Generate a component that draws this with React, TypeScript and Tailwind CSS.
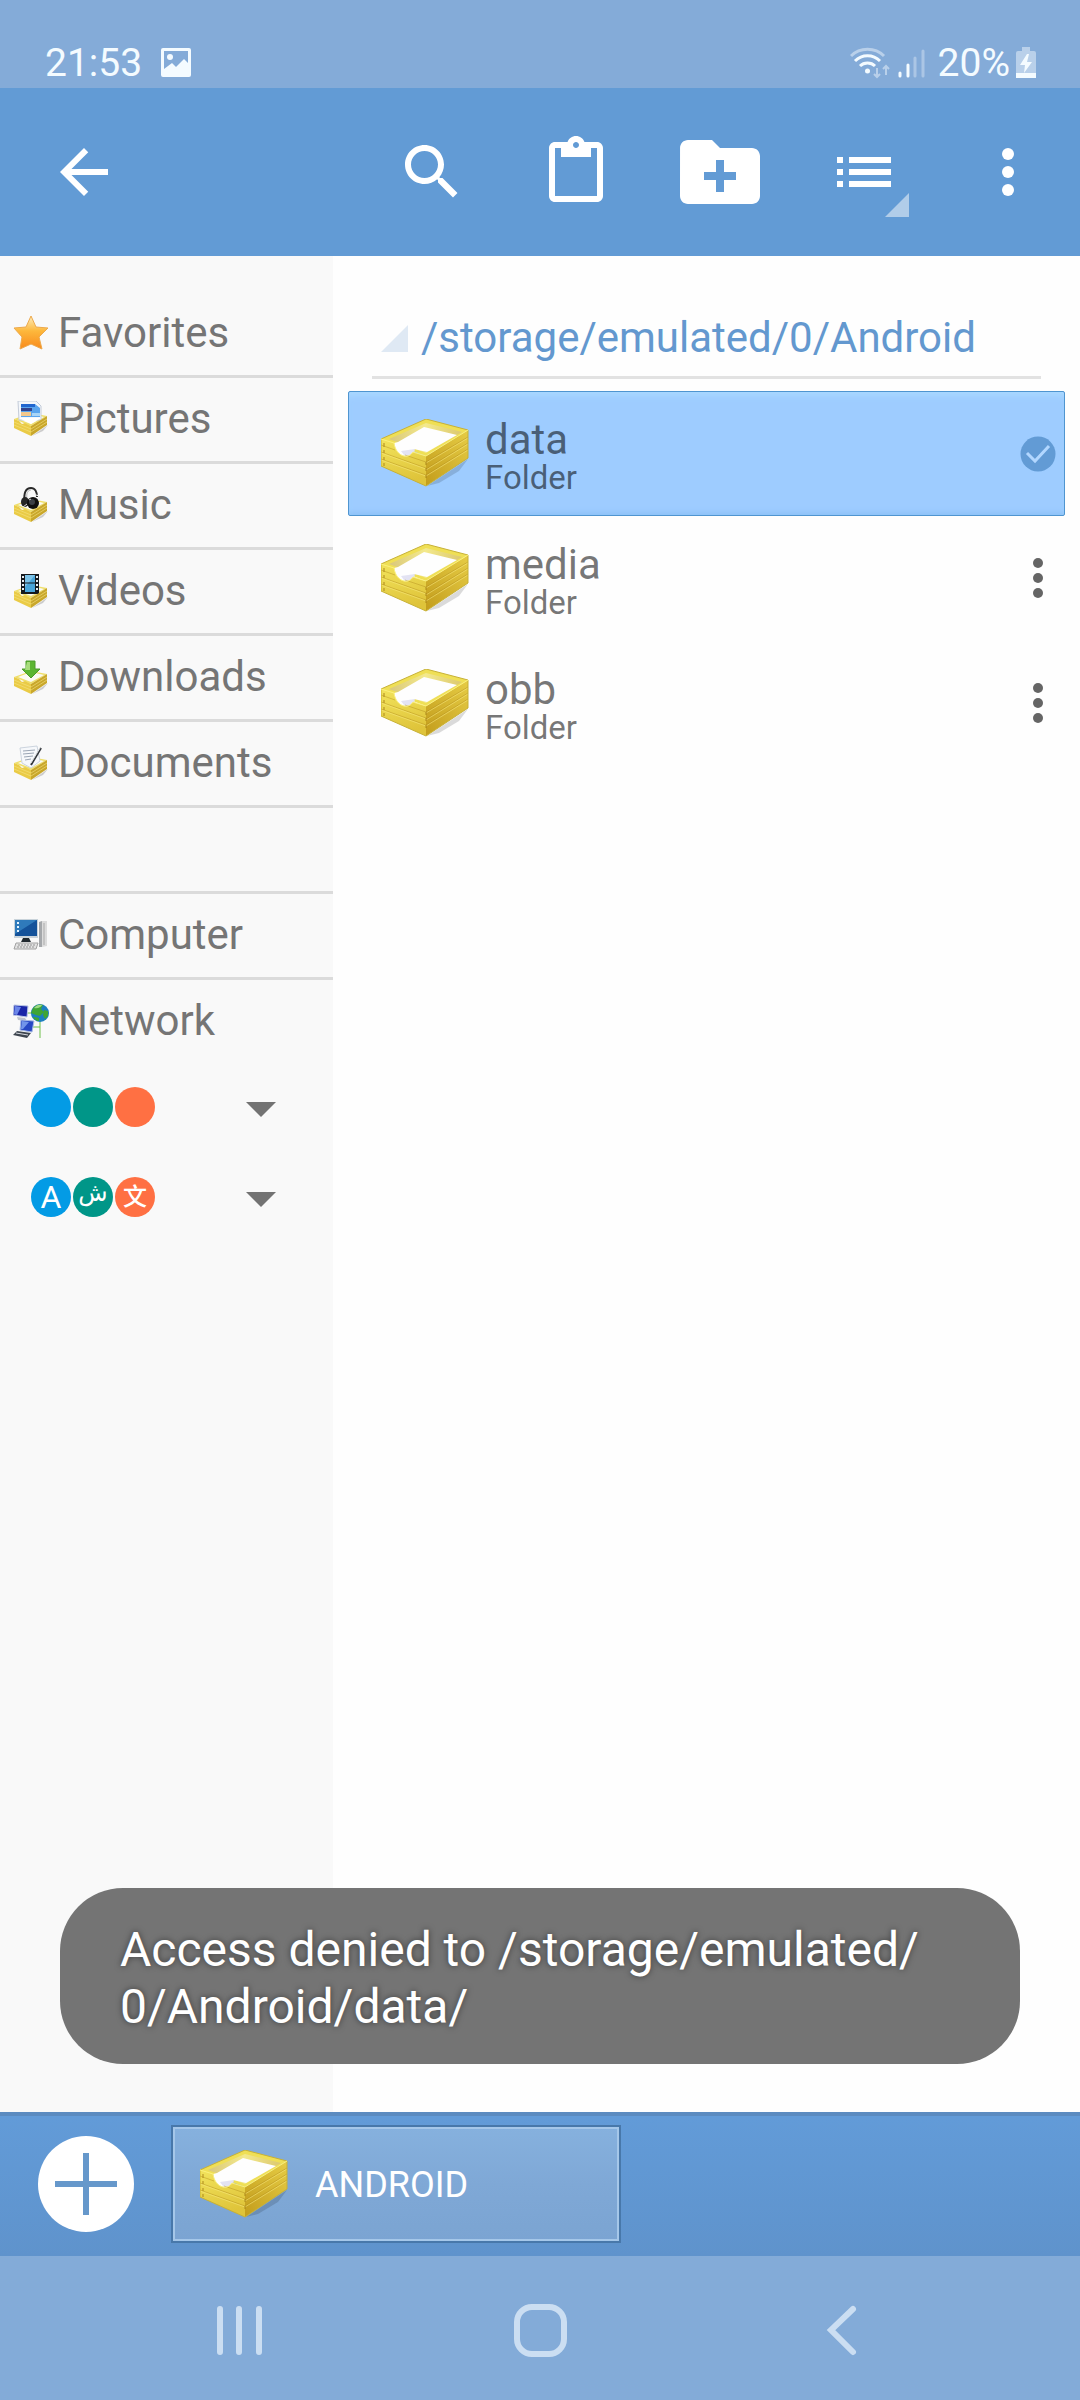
import type { ReactNode } from "react";

interface SidebarEntry {
  label: string;
  icon: ReactNode;
}

interface FileEntry {
  name: string;
  kind: string;
  selected?: boolean;
}

/* Large letter tray used for folders */
function FolderIcon() {
  return (
    <svg className="w-[88px] h-[70px] shrink-0" viewBox="0 0 88 70" aria-hidden="true">
      <defs>
        <linearGradient id="trayLeft" x1="0" y1="0" x2="0.3" y2="1">
          <stop offset="0" stopColor="#f2e35c" />
          <stop offset="1" stopColor="#dfc43a" />
        </linearGradient>
        <linearGradient id="trayRight" x1="0" y1="1" x2="1" y2="0">
          <stop offset="0" stopColor="#c39d1c" />
          <stop offset="1" stopColor="#e6cc45" />
        </linearGradient>
        <linearGradient id="trayInner" x1="0" y1="0" x2="1" y2="0">
          <stop offset="0" stopColor="#d9c77c" />
          <stop offset="0.5" stopColor="#f3e98c" />
          <stop offset="1" stopColor="#dcc870" />
        </linearGradient>
      </defs>
      <path d="M46 67 87 40 78 52 58 64z" fill="#000" opacity="0.14" />
      <path d="M0 20 45 0 87 11 45 37z" fill="#efdf55" />
      <path d="M8 20 45 4 81 13 45 34z" fill="url(#trayInner)" />
      {/* paper, running down into the notch at the front */}
      <path d="M17 23 43 8 76 16 46 33 33 30 31 38 22 40 14 32 13 24z" fill="#fefefe" />
      <path d="M20 32 34 30 32 38 26 40z" fill="#e3e3f3" />
      <path d="M0 20 13 24C14 31 18 36 23 37c4 1 7-1 9-4L45 37V67L0 47z" fill="url(#trayLeft)" />
      <path d="M45 37 87 11V39L45 67z" fill="url(#trayRight)" />
      <path
        d="M0 26 14 31M24 36 45 43M0 33 45 49M0 40 45 56M45 43 87 18M45 50 87 24M45 56 87 30"
        stroke="#b48d1c"
        strokeWidth="1"
        opacity="0.45"
        fill="none"
      />
      <path
        d="M0 34 45 50M0 41 45 57M45 44 87 19M45 51 87 25M45 57 87 31"
        stroke="#fbee83"
        strokeWidth="1"
        opacity="0.5"
        fill="none"
      />
      <path d="M3 24v4M3 31v3M3 38v3M3 44v3M45 43v3M45 49v3M45 56v3" stroke="#a98317" strokeWidth="2" opacity="0.45" />
      <path d="M0 20 45 0 87 11V39L45 67 0 47z" fill="none" stroke="#c7b136" strokeWidth="1" />
      <path d="M0 20 13 24C14 31 18 36 23 37c4 1 7-1 9-4L45 37 87 11" fill="none" stroke="#fbf07c" strokeWidth="1" />
    </svg>
  );
}

/* Small tray with something sticking out of it */
function TrayIcon({ children }: { children: ReactNode }) {
  return (
    <svg className="size-9 shrink-0" viewBox="0 0 36 36" aria-hidden="true">
      <path d="M19 35 35 24 30 30z" fill="#000" opacity="0.18" />
      <path d="M1 18 18 12 34 15 18 25z" fill="#efdf6b" />
      <path d="M5 18 18 13 31 16 18 23z" fill="#fbfaf4" />
      {children}
      <path d="M1 18 6 20 9 23 12 22 18 25V35L1 27z" fill="#eacb46" />
      <path d="M18 25 34 15V24L18 35z" fill="#c9a72b" />
      <path d="M1 21 18 28 34 18M1 24 18 31 34 21" fill="none" stroke="#f5e382" strokeWidth="1" opacity="0.6" />
    </svg>
  );
}

function StarIcon() {
  return (
    <svg className="size-9 shrink-0" viewBox="0 0 36 36" aria-hidden="true">
      <defs>
        <linearGradient id="star" x1="0" y1="0" x2="0" y2="1">
          <stop offset="0" stopColor="#fdeec0" />
          <stop offset="0.45" stopColor="#fdb83c" />
          <stop offset="1" stopColor="#f98a1c" />
        </linearGradient>
      </defs>
      <path
        d="M18 1 23 12 35 13 26 22 29 34 18 29 7 34 9 22 1 13 13 12z"
        fill="url(#star)"
        stroke="#eda94c"
        strokeWidth="1"
        strokeLinejoin="round"
      />
    </svg>
  );
}

function ComputerIcon() {
  return (
    <svg className="size-9 shrink-0" viewBox="0 0 36 36" aria-hidden="true">
      <path d="M26 5 29 4V30H26z" fill="#a5a8ab" />
      <path d="M29 4H34V29L29 30z" fill="#dcdcdc" />
      <path d="M31 6v22" stroke="#aaa" />
      <rect x="1" y="2" width="24" height="19" fill="#c9d3da" />
      <rect x="2" y="3" width="22" height="16" fill="#14529a" />
      <path d="M2 3H24L2 17z" fill="#3b8bc9" opacity="0.7" />
      <path d="M4 5h2v2H4zM4 9h2v2H4zM4 13h2v2H4z" fill="#e4f4ff" />
      <path d="M10 21h6l2 4H8z" fill="#222a30" />
      <path d="M3 26H25L23 32H1z" fill="#e2e2e2" stroke="#a2a2a2" />
      <path d="M5 28h17M4 30h17" stroke="#949494" strokeDasharray="2 1" />
    </svg>
  );
}

function NetworkIcon() {
  return (
    <svg className="size-9 shrink-0" viewBox="0 0 36 36" aria-hidden="true">
      <path d="M14 10H26M27 18V35M20 24H27" stroke="#6fc04a" strokeWidth="1" fill="none" />
      <path d="M1 2 15 3 14 14 0 12z" fill="#1a26a8" stroke="#b9c6e6" />
      <path d="M2 3 8 4 4 12 1 11z" fill="#6b86e8" />
      <path d="M4 14 12 15 14 18 5 17z" fill="#bfc4cc" />
      <path d="M8 17 21 18 19 29 7 27z" fill="#2748c4" stroke="#a9bbe4" />
      <path d="M9 18 16 19 10 26 8 26z" fill="#7295ea" />
      <path d="M4 28 18 30 14 35 0 32z" fill="#3f4650" />
      <path d="M3 30 15 32" stroke="#d8dbe0" />
      <circle cx="27" cy="10" r="9" fill="#1d7fc0" />
      <path d="M20 5c3-4 8-4 10-3l-2 4 3 3-4 4-4-1-5-2zM31 7l4 1v5l-3 3-2-4zM22 14l4 1v3c-3 0-5-2-6-4z" fill="#3fa535" />
      <path d="M21 5c2-3 6-4 8-3-1 2-4 4-8 3z" fill="#c8f0a8" opacity="0.7" />
    </svg>
  );
}

const PLACES: SidebarEntry[] = [
  { label: "Favorites", icon: <StarIcon /> },
  {
    label: "Pictures",
    icon: (
      <TrayIcon>
        <path d="M5 0H23L28 5V19H6z" fill="#f4f7fb" stroke="#c3cbd8" />
        <path d="M8 3H22L27 7V16H8z" fill="#5ba5ee" />
        <path d="M8 3H22V6H8z" fill="#2166cf" />
        <path d="M8 7h11v3H8z" fill="#33448e" />
        <path d="M8 11h10v4H8z" fill="#f3c88d" />
        <path d="M19 12h8v3h-8z" fill="#a9d5f7" />
        <path d="M6 17 28 17 18 23z" fill="#fff" />
      </TrayIcon>
    ),
  },
  {
    label: "Music",
    icon: (
      <TrayIcon>
        <path d="M12 15C10 6 13 1 18 1c4 0 6 4 6 9" fill="none" stroke="#2a2a2a" strokeWidth="2" />
        <path d="M14 12C13 6 15 3 18 3" fill="none" stroke="#b7b7b7" strokeWidth="1" />
        <ellipse cx="12" cy="15" rx="4" ry="5" fill="#262626" />
        <circle cx="20" cy="16" r="6" fill="#101010" />
        <circle cx="19" cy="15" r="3" fill="#3c4046" />
        <path d="M23 8 26 9V14" stroke="#eee" fill="none" />
        <path d="M10 20 14 17M16 13l2-1" stroke="#ddd" />
      </TrayIcon>
    ),
  },
  {
    label: "Videos",
    icon: (
      <TrayIcon>
        <rect x="8" y="1" width="18" height="20" fill="#15191d" />
        <rect x="12" y="2" width="10" height="17" fill="#4aa5d8" />
        <path d="M12 2H22L12 14z" fill="#9ed5f2" opacity="0.6" />
        <path d="M12 10h10" stroke="#15191d" />
        <path d="M10 3v16M24 3v16" stroke="#e8eef2" strokeWidth="2" strokeDasharray="2 2" />
      </TrayIcon>
    ),
  },
  {
    label: "Downloads",
    icon: (
      <TrayIcon>
        <path d="M13 2H22V10H27L18 19 9 10H13z" fill="#5bb531" stroke="#4c9a2c" />
        <path d="M14 3H17V11H12z" fill="#a7dc7c" />
      </TrayIcon>
    ),
  },
  {
    label: "Documents",
    icon: (
      <TrayIcon>
        <path d="M7 3 24 1 27 16 18 23 9 18z" fill="#f6f8fb" stroke="#ccd4de" />
        <path d="M10 6 22 5M10 9 21 8M11 12 20 11M12 15 18 14" stroke="#9aa5b4" />
        <path d="M28 3 18 20" stroke="#33373c" strokeWidth="2" />
        <path d="M27 3 18 18" stroke="#d9dde2" strokeWidth="1" />
      </TrayIcon>
    ),
  },
];

const DEVICES: SidebarEntry[] = [
  { label: "Computer", icon: <ComputerIcon /> },
  { label: "Network", icon: <NetworkIcon /> },
];

const FILES: FileEntry[] = [
  { name: "data", kind: "Folder", selected: true },
  { name: "media", kind: "Folder" },
  { name: "obb", kind: "Folder" },
];

function StatusBar() {
  return (
    <div className="h-22 bg-[#84abd8] flex items-end justify-between pl-[45px] pr-11 pb-[3px] text-[39px] leading-[44px] text-[#f4fbff]">
      <div className="flex items-center gap-[18px]">
        <span>21:53</span>
        <svg className="size-8" viewBox="0 0 32 32" aria-hidden="true">
          <path
            d="M3 1H29a2 2 0 0 1 2 2V28a2 2 0 0 1-2 2H3a2 2 0 0 1-2-2V3a2 2 0 0 1 2-2zM4 4V22L12 16 16 20 24 12 28 16V4z"
            fill="currentColor"
            fillRule="evenodd"
          />
          <circle cx="10" cy="10" r="3" fill="currentColor" />
        </svg>
      </div>
      <div className="flex items-center">
        <svg className="w-10 h-8 mr-2" viewBox="0 0 40 32" fill="none" aria-hidden="true">
          <path d="M1 9C10 0 25 0 34 9" stroke="#b9d0ea" strokeWidth="3" />
          <path d="M5 14C12 7 23 7 30 14" stroke="currentColor" strokeWidth="3" />
          <path d="M10 19C14 15 21 15 25 19" stroke="currentColor" strokeWidth="3" />
          <circle cx="17.500" cy="24" r="2.500" fill="currentColor" />
          <path d="M27 21V30M24 27l3 3 3-3M36 28V19M33 22l3-3 3 3" stroke="#b9d0ea" strokeWidth="2" />
        </svg>
        <svg className="w-7 h-8 mr-3" viewBox="0 0 28 32" strokeWidth="3" strokeLinecap="round" aria-hidden="true">
          <path d="M2 26v3M10 18v11" stroke="currentColor" />
          <path d="M17 11v18M25 4v25" stroke="#abc6e5" />
        </svg>
        <span>20%</span>
        <svg className="w-5 h-8 ml-[6px]" viewBox="0 0 20 32" aria-hidden="true">
          <path d="M6 0H14V4H18a2 2 0 0 1 2 2V26H0V6A2 2 0 0 1 2 4H6z" fill="#b9d0ea" />
          <path d="M0 26H20V31H0z" fill="currentColor" />
          <path d="M11 7 4 18H9L8 26 16 15H11L13 7z" fill="currentColor" />
        </svg>
      </div>
    </div>
  );
}

function ToolButton({ label, children }: { label: string; children: ReactNode }) {
  return (
    <button type="button" aria-label={label} className="relative w-36 h-full flex items-center justify-center">
      {children}
    </button>
  );
}

function Toolbar() {
  return (
    <header className="h-42 bg-[#629bd5] text-white flex items-center">
      <button type="button" aria-label="Back" className="h-full pl-12 pr-6 flex items-center">
        <svg className="size-18" viewBox="0 0 24 24" fill="currentColor">
          <path d="M20 11H7.830l5.590-5.590L12 4l-8 8 8 8 1.410-1.410L7.830 13H20v-2z" />
        </svg>
      </button>
      <div className="ml-auto h-full flex">
        <ToolButton label="Search">
          <svg className="size-18" viewBox="0 0 24 24" fill="currentColor">
            <path d="M15.500 14h-.79l-.28-.27C15.410 12.590 16 11.110 16 9.500 16 5.910 13.090 3 9.500 3S3 5.910 3 9.500 5.910 16 9.500 16c1.610 0 3.090-.59 4.230-1.570l.27.28v.79l5 4.990L20.490 19l-4.990-5zm-6 0C7.010 14 5 11.990 5 9.500S7.010 5 9.500 5 14 7.010 14 9.500 11.990 14 9.500 14z" />
          </svg>
        </ToolButton>
        <ToolButton label="Paste">
          <svg className="size-18" viewBox="0 0 24 24" fill="currentColor">
            <path d="M19 2h-4.180C14.400.84 13.300 0 12 0c-1.300 0-2.400.84-2.820 2H5c-1.100 0-2 .9-2 2v16c0 1.100.9 2 2 2h14c1.100 0 2-.9 2-2V4c0-1.100-.9-2-2-2zm-7 0c.55 0 1 .45 1 1s-.45 1-1 1-1-.45-1-1 .45-1 1-1zm7 18H5V4h2v3h10V4h2v16z" />
          </svg>
        </ToolButton>
        <ToolButton label="New folder">
          <svg className="size-24" viewBox="0 0 24 24" fill="currentColor">
            <path d="M20 6h-8l-2-2H4c-1.110 0-1.990.89-1.990 2L2 18c0 1.100.89 2 2 2h16c1.100 0 2-.9 2-2V8c0-1.110-.9-2-2-2zm-4 8h-3v3h-2v-3H8v-2h3V9h2v3h3v2z" />
          </svg>
        </ToolButton>
        <ToolButton label="View mode">
          <svg className="size-18" viewBox="0 0 24 24" fill="currentColor">
            <path d="M3 13h2v-2H3v2zm0 4h2v-2H3v2zm0-8h2V7H3v2zm4 4h14v-2H7v2zm0 4h14v-2H7v2zM7 7v2h14V7H7z" />
          </svg>
          <svg className="absolute right-[27px] bottom-[39px] size-6" viewBox="0 0 24 24">
            <path d="M24 0V24H0z" fill="#b1cde9" />
          </svg>
        </ToolButton>
        <ToolButton label="More options">
          <svg className="size-18" viewBox="0 0 24 24" fill="currentColor">
            <circle cx="12" cy="6" r="2" />
            <circle cx="12" cy="12" r="2" />
            <circle cx="12" cy="18" r="2" />
          </svg>
        </ToolButton>
      </div>
    </header>
  );
}

function SidebarRow({ entry, last }: { entry: SidebarEntry; last?: boolean }) {
  return (
    <li className={last ? "" : "border-b-3 border-[#dbdbdb]"}>
      <button type="button" className="w-full h-[83px] pl-[13px] pb-[2px] flex items-center gap-[9px] text-left">
        {entry.icon}
        {entry.label}
      </button>
    </li>
  );
}

function PickerButton({ label, glyphs }: { label: string; glyphs: string[] }) {
  return (
    <button
      type="button"
      aria-label={label}
      aria-haspopup="listbox"
      className="w-full h-[90px] pl-[31px] pr-[57px] pb-[2px] flex items-center justify-between"
    >
      <span className="flex gap-[2px] leading-10 text-white text-center font-['Roboto','DejaVu_Sans','Noto_Sans_CJK_SC',sans-serif]">
        <span className="size-10 rounded-full bg-[#039be5] text-[32px]">{glyphs[0]}</span>
        <span className="size-10 rounded-full bg-[#009688] text-[24px] leading-8">{glyphs[1]}</span>
        <span className="size-10 rounded-full bg-[#ff7043] text-[24px] font-medium">{glyphs[2]}</span>
      </span>
      <svg className="w-[30px] h-[15px] mt-1" viewBox="0 0 30 15" aria-hidden="true">
        <path d="M0 0H30L15 15z" fill="#737373" />
      </svg>
    </button>
  );
}

function Sidebar() {
  return (
    <nav className="w-[333px] shrink-0 bg-[#f9f9f9] pt-9 text-[42px] leading-[50px] text-[#757575]">
      <ul>
        {PLACES.map((entry) => (
          <SidebarRow key={entry.label} entry={entry} />
        ))}
        <li className="h-[86px] border-b-3 border-[#dbdbdb]" />
        {DEVICES.map((entry, i) => (
          <SidebarRow key={entry.label} entry={entry} last={i === DEVICES.length - 1} />
        ))}
      </ul>
      <PickerButton label="Theme" glyphs={["", "", ""]} />
      <PickerButton label="Language" glyphs={["A", "ش", "文"]} />
    </nav>
  );
}

function FileRow({ file }: { file: FileEntry }) {
  return (
    <li
      className={
        file.selected
          ? "h-[125px] pl-8 pr-2 flex items-center border border-[#4f95d0] rounded-[2px] bg-[#9eccff] shadow-[inset_0_6px_6px_-2px_#a9d8ff,inset_0_-5px_5px_-2px_#8ec3f8]"
          : "h-[125px] pl-8 pr-2 flex items-center border border-transparent"
      }
    >
      <FolderIcon />
      <div className="ml-4 pt-1 grow text-black/54">
        <div className="text-[42px] leading-[44px]">{file.name}</div>
        <div className="text-[33px] leading-8">{file.kind}</div>
      </div>
      {file.selected ? (
        <svg className="size-9" viewBox="0 0 36 36" role="img" aria-label="Selected">
          <circle cx="18" cy="18" r="17.500" fill="#629bd5" />
          <path d="M7 17 15 25 29 10" fill="none" stroke="#b2d7ff" strokeWidth="3" />
        </svg>
      ) : (
        <button type="button" aria-label="File options" className="size-9 mb-[2px] flex items-center justify-center">
          <svg className="w-3 h-10 shrink-0" viewBox="0 0 12 40" fill="#656565">
            <circle cx="6" cy="5" r="5" />
            <circle cx="6" cy="20" r="5" />
            <circle cx="6" cy="35" r="5" />
          </svg>
        </button>
      )}
    </li>
  );
}

function FileList() {
  return (
    <main className="grow min-w-0 bg-[#fefefe] pl-[15px] pr-[15px] pt-9">
      <a
        href="#path"
        className="mx-6 h-[87px] pt-2 flex items-center gap-[13px] pl-[9px] border-b-3 border-[#e2e2e2] text-[42px] leading-[50px] text-[#6398cf]"
      >
        <svg className="size-[27px] shrink-0" viewBox="0 0 27 27" aria-hidden="true">
          <path d="M27 0V27H0z" fill="#dfe9f4" />
        </svg>
        /storage/emulated/0/Android
      </a>
      <ul className="mt-3">
        {FILES.map((file) => (
          <FileRow key={file.name} file={file} />
        ))}
      </ul>
    </main>
  );
}

function Toast() {
  return (
    <div
      role="status"
      className="absolute inset-x-15 bottom-12 rounded-[63px] bg-[#747474] px-15 pt-[33px] pb-[29px] text-[48px] leading-[57px] text-white [text-shadow:0_0_6px_rgba(0,0,0,0.5)]"
    >
      Access denied to /storage/emulated/
      <wbr />
      0/Android/data/
    </div>
  );
}

function TabBar() {
  return (
    <div className="h-36 border-t-4 border-[#5b8bc0] bg-linear-to-b from-[#629bd8] to-[#5f93cc] flex items-center pl-[38px] pb-1 gap-[37px]">
      <button type="button" aria-label="New tab" className="size-24 shrink-0 rounded-full bg-white flex items-center justify-center">
        <svg className="size-[62px]" viewBox="0 0 62 62" aria-hidden="true">
          <path d="M31 0V62M0 31H62" stroke="#6698cb" strokeWidth="6" />
        </svg>
      </button>
      <button
        type="button"
        className="w-[450px] h-[118px] border-2 border-[#4878aa] bg-linear-to-b from-[#86b1de] via-[#7fa8d6] to-[#7ba4d2] shadow-[inset_0_0_0_2px_#a5c7e9] pl-[27px] pt-[2px] flex items-center gap-[27px] text-[36px] text-white"
      >
        <FolderIcon />
        ANDROID
      </button>
    </div>
  );
}

function NavigationBar() {
  return (
    <div className="h-36 px-22 pt-1 bg-[#83abd8] text-[#cbdef2] flex items-center justify-around">
      <button type="button" aria-label="Recents" className="p-4">
        <svg className="size-14" viewBox="0 0 56 56" stroke="currentColor" strokeWidth="6" strokeLinecap="round">
          <path d="M9 7V50M28 7V50M48 7V50" />
        </svg>
      </button>
      <button type="button" aria-label="Home" className="p-4">
        <svg className="size-14" viewBox="0 0 56 56" fill="none" stroke="currentColor" strokeWidth="6">
          <rect x="5" y="5" width="47" height="47" rx="15" />
        </svg>
      </button>
      <button type="button" aria-label="Back" className="p-4">
        <svg className="size-14" viewBox="0 0 56 56" fill="none" stroke="currentColor" strokeWidth="6" strokeLinecap="round">
          <path d="M40 7 18 28 40 50" />
        </svg>
      </button>
    </div>
  );
}

export default function App() {
  return (
    <div className="min-h-screen flex flex-col bg-[#fefefe] font-['Roboto',sans-serif]">
      <StatusBar />
      <Toolbar />
      <div className="relative grow flex">
        <Sidebar />
        <FileList />
        <Toast />
      </div>
      <TabBar />
      <NavigationBar />
    </div>
  );
}
